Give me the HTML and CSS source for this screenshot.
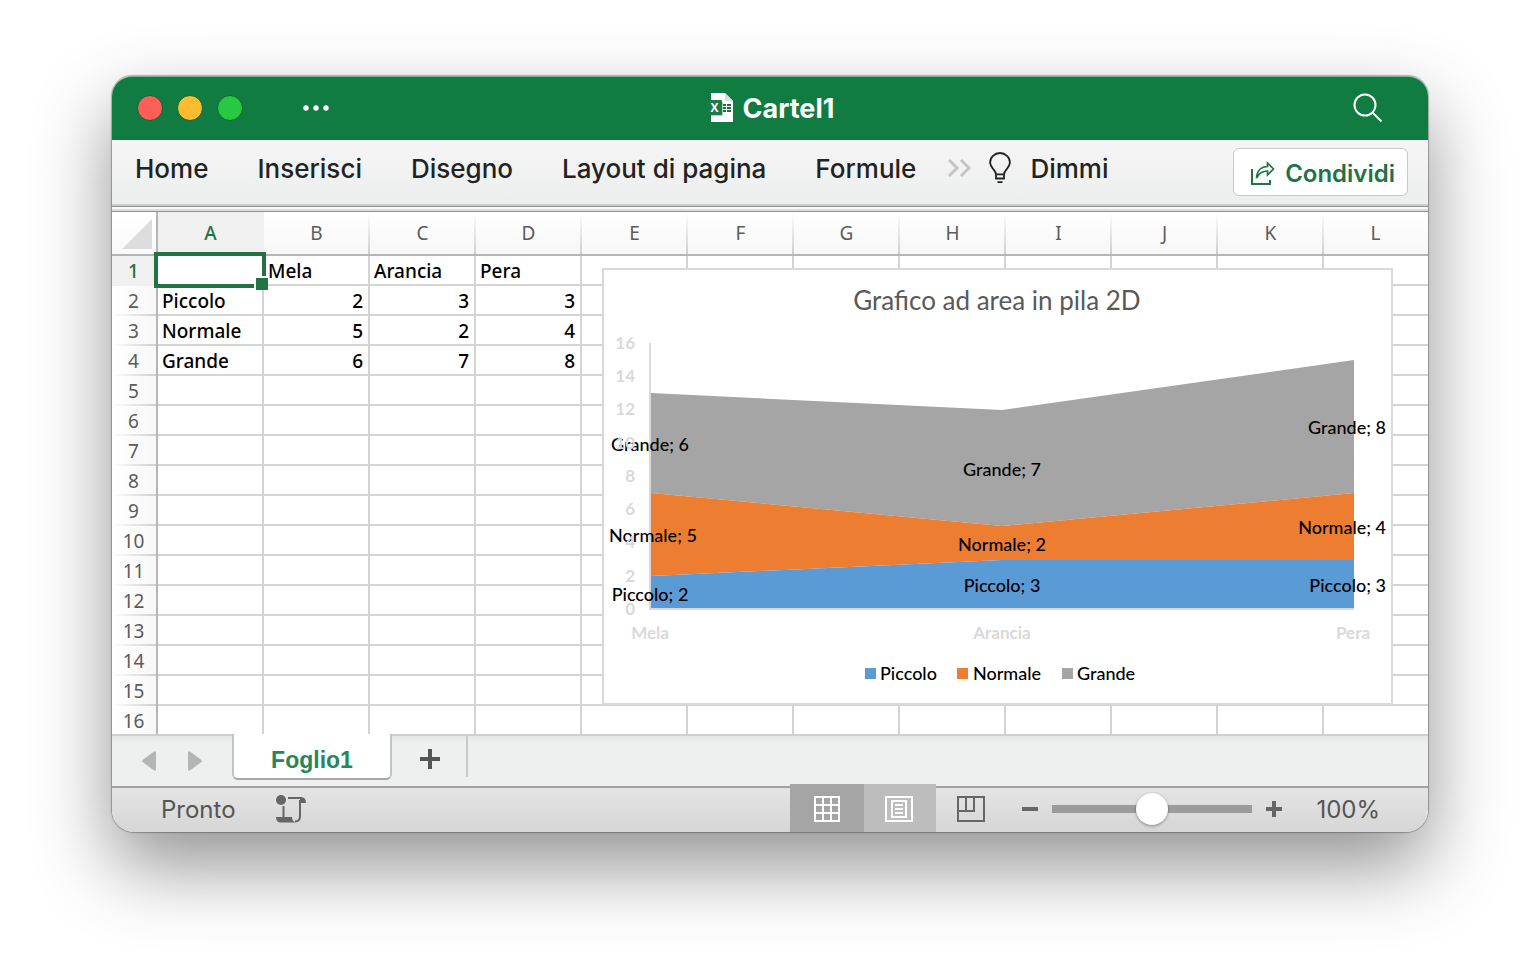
FILE: index.html
```html
<!DOCTYPE html>
<html lang="it">
<head>
<meta charset="utf-8">
<title>Cartel1</title>
<link rel="stylesheet" href="styles.css">
</head>
<body>
<main class="window">
  <header class="titlebar">
    <div class="title-left">
      <button class="light red" aria-label="Chiudi"></button>
      <button class="light yellow" aria-label="Riduci"></button>
      <button class="light green" aria-label="Ingrandisci"></button>
      <button class="icon-button more" aria-label="Altro">
        <svg width="28" height="8" viewBox="0 0 28 8" fill="#fff"><circle cx="4" cy="4" r="2.7"/><circle cx="14" cy="4" r="2.7"/><circle cx="24" cy="4" r="2.7"/></svg>
      </button>
    </div>
    <h1 class="title">
      <svg width="28" height="32" viewBox="0 0 28 32" aria-hidden="true">
        <path d="M4 1h14l8 8v21H4z" fill="#fff"/>
        <path d="M18 1v8h8z" fill="#d4e3da"/>
        <path d="M16 12h3v2h-3zM20 12h4v2h-4zM16 15h3v2h-3zM20 15h4v2h-4zM16 18h3v2h-3zM20 18h4v2h-4z" fill="#14703f"/>
        <rect x="4" y="10" width="12" height="14" fill="#bcd3c6"/>
        <rect x="0" y="8" width="15" height="15" rx="1" fill="#1b7b48"/>
        <text x="7.500" y="20" text-anchor="middle" class="doc-x">X</text>
      </svg>
      <span>Cartel1</span>
    </h1>
    <div class="title-right">
      <button class="icon-button" aria-label="Cerca">
        <svg width="32" height="32" viewBox="0 0 32 32" fill="none" stroke="#fff" stroke-width="2"><circle cx="13" cy="13" r="10.500"/><path d="M20.500 20.500l9 9"/></svg>
      </button>
    </div>
  </header>

  <nav class="ribbon">
    <button class="tab">Home</button>
    <button class="tab">Inserisci</button>
    <button class="tab">Disegno</button>
    <button class="tab">Layout di pagina</button>
    <button class="tab">Formule</button>
    <div class="ribbon-extra">
      <button class="icon-button" aria-label="Altre schede">
        <svg width="24" height="20" viewBox="0 0 24 20" fill="none" stroke="#c4c4c4" stroke-width="3"><path d="M2 2l8 8-8 8M14 2l8 8-8 8"/></svg>
      </button>
      <button class="tab tell">
        <svg width="22" height="32" viewBox="0 0 22 32" fill="none" stroke="#222" stroke-width="1.800"><path d="M7 22.500c0-5-5.900-6-5.900-12a9.900 9.500 0 0 1 19.800 0c0 6-5.900 7-5.900 12v4H7zM7 22.300h8M8.500 30.200h5" fill="none"/></svg>
        <span>Dimmi</span>
      </button>
    </div>
    <button class="share">
      <svg width="26" height="26" viewBox="0 0 26 26" fill="none" stroke="#217346" stroke-width="2"><path d="M2 9v15h18v-4"/><path d="M6.500 18c.5-7 4.500-11.500 11-11.500V3l6 6-6 6v-4c-5 0-8.500 2-11 7z" stroke-width="1.700"/></svg>
      <span>Condividi</span>
    </button>
  </nav>
  <div class="splitter"></div>

  <section class="sheet">
    <table class="grid">
      <colgroup><col class="col-head"><col class="col"><col class="col"><col class="col"><col class="col"><col class="col"><col class="col"><col class="col"><col class="col"><col class="col"><col class="col"><col class="col"><col></colgroup>
      <thead>
        <tr>
          <th class="corner"><svg width="30" height="30" viewBox="0 0 30 30" aria-hidden="true"><path d="M30 0v30H0z" fill="#dcdcdc"/></svg></th>
          <th scope="col" class="current">A</th><th scope="col">B</th><th scope="col">C</th><th scope="col">D</th><th scope="col">E</th><th scope="col">F</th><th scope="col">G</th><th scope="col">H</th><th scope="col">I</th><th scope="col">J</th><th scope="col">K</th><th scope="col">L</th>
        </tr>
      </thead>
      <tbody>
        <tr><th scope="row" class="current">1</th><td class="selected"><div class="selection"></div></td><td>Mela</td><td>Arancia</td><td>Pera</td><td></td><td></td><td></td><td></td><td></td><td></td><td></td><td></td></tr>
        <tr><th scope="row">2</th><td>Piccolo</td><td class="num">2</td><td class="num">3</td><td class="num">3</td><td></td><td></td><td></td><td></td><td></td><td></td><td></td><td></td></tr>
        <tr><th scope="row">3</th><td>Normale</td><td class="num">5</td><td class="num">2</td><td class="num">4</td><td></td><td></td><td></td><td></td><td></td><td></td><td></td><td></td></tr>
        <tr><th scope="row">4</th><td>Grande</td><td class="num">6</td><td class="num">7</td><td class="num">8</td><td></td><td></td><td></td><td></td><td></td><td></td><td></td><td></td></tr>
        <tr><th scope="row">5</th><td></td><td></td><td></td><td></td><td></td><td></td><td></td><td></td><td></td><td></td><td></td><td></td></tr>
        <tr><th scope="row">6</th><td></td><td></td><td></td><td></td><td></td><td></td><td></td><td></td><td></td><td></td><td></td><td></td></tr>
        <tr><th scope="row">7</th><td></td><td></td><td></td><td></td><td></td><td></td><td></td><td></td><td></td><td></td><td></td><td></td></tr>
        <tr><th scope="row">8</th><td></td><td></td><td></td><td></td><td></td><td></td><td></td><td></td><td></td><td></td><td></td><td></td></tr>
        <tr><th scope="row">9</th><td></td><td></td><td></td><td></td><td></td><td></td><td></td><td></td><td></td><td></td><td></td><td></td></tr>
        <tr><th scope="row">10</th><td></td><td></td><td></td><td></td><td></td><td></td><td></td><td></td><td></td><td></td><td></td><td></td></tr>
        <tr><th scope="row">11</th><td></td><td></td><td></td><td></td><td></td><td></td><td></td><td></td><td></td><td></td><td></td><td></td></tr>
        <tr><th scope="row">12</th><td></td><td></td><td></td><td></td><td></td><td></td><td></td><td></td><td></td><td></td><td></td><td></td></tr>
        <tr><th scope="row">13</th><td></td><td></td><td></td><td></td><td></td><td></td><td></td><td></td><td></td><td></td><td></td><td></td></tr>
        <tr><th scope="row">14</th><td></td><td></td><td></td><td></td><td></td><td></td><td></td><td></td><td></td><td></td><td></td><td></td></tr>
        <tr><th scope="row">15</th><td></td><td></td><td></td><td></td><td></td><td></td><td></td><td></td><td></td><td></td><td></td><td></td></tr>
        <tr class="last"><th scope="row">16</th><td></td><td></td><td></td><td></td><td></td><td></td><td></td><td></td><td></td><td></td><td></td><td></td></tr>
      </tbody>
    </table>

    <svg class="chart" width="791" height="437" viewBox="0 0 791 437" role="img" aria-label="Grafico ad area in pila 2D">
      <rect x="1" y="1" width="789" height="435" fill="#fff" stroke="#d9d9d9" stroke-width="2"/>
      <text class="chart-title" x="395" y="42">Grafico ad area in pila 2D</text>
      <path d="M49 125L400 142L752 92V225L400 258L49 225z" fill="#a5a5a5"/>
      <path d="M49 225L400 258L752 225V292H400L49 308z" fill="#ed7d31"/>
      <path d="M49 308L400 292H752V341H49z" fill="#5b9bd5"/>
      <path d="M48 75V341H752" fill="none" stroke="#d9d9d9" stroke-width="2"/>
      <g class="label">
        <text x="48" y="183">Grande; 6</text><text x="51" y="274">Normale; 5</text><text x="48" y="333">Piccolo; 2</text>
        <text x="400" y="208">Grande; 7</text><text x="400" y="283">Normale; 2</text><text x="400" y="324">Piccolo; 3</text>
      </g>
      <g class="label end">
        <text x="784" y="166">Grande; 8</text><text x="784" y="266">Normale; 4</text><text x="784" y="324">Piccolo; 3</text>
      </g>
      <g class="axis end">
        <text x="33" y="81">16</text><text x="33" y="114">14</text><text x="33" y="147">12</text><text x="33" y="181">10</text><text x="33" y="214">8</text><text x="33" y="247">6</text><text x="33" y="280">4</text><text x="33" y="314">2</text><text x="33" y="347">0</text>
      </g>
      <g class="axis">
        <text x="48" y="371">Mela</text><text x="400" y="371">Arancia</text><text x="751" y="371">Pera</text>
      </g>
      <rect x="263" y="400" width="11" height="11" fill="#5b9bd5"/>
      <rect x="355" y="400" width="11" height="11" fill="#ed7d31"/>
      <rect x="460" y="400" width="11" height="11" fill="#a5a5a5"/>
      <g class="label start">
        <text x="278" y="412">Piccolo</text><text x="371" y="412">Normale</text><text x="475" y="412">Grande</text>
      </g>
    </svg>
  </section>

  <nav class="sheets">
    <div class="arrows">
      <button class="icon-button" aria-label="Foglio precedente"><svg width="14" height="20" viewBox="0 0 14 20"><path d="M14 1v18q-1 1-2 .5L.5 11q-.8-1 0-2L12 .5q1-.5 2 .5z" fill="#b5b5b5"/></svg></button>
      <button class="icon-button" aria-label="Foglio successivo"><svg width="14" height="20" viewBox="0 0 14 20"><path d="M0 1v18q1 1 2 .5L13.500 11q.8-1 0-2L2 .5Q1 0 0 1z" fill="#b5b5b5"/></svg></button>
    </div>
    <button class="sheet-tab">Foglio1</button>
    <button class="add-sheet" aria-label="Aggiungi foglio"><svg width="20" height="20" viewBox="0 0 20 20"><path d="M0 10h20M10 0v20" stroke="#555" stroke-width="4"/></svg></button>
  </nav>

  <footer class="status">
    <span class="ready">Pronto</span>
    <button class="icon-button" aria-label="Accessibilità">
      <svg width="30" height="28" viewBox="0 0 30 28" fill="none"><circle cx="5" cy="5" r="5" fill="#666"/><path d="M7.500 11v12M12 3h13.500M24 5v16q0 5.500-5 5.500" stroke="#666" stroke-width="2"/><path d="M0 22h16q0 4 3.500 5.500H5Q0 27.500 0 22zM24 2h1q5 0 5 6h-6z" fill="#666"/></svg>
    </button>
    <div class="views">
      <button class="view normal" aria-label="Normale"><svg width="28" height="28" viewBox="0 0 28 28" fill="none" stroke="#fff" stroke-width="2"><path d="M2 2h24v24H2zM10 2v24M18 2v24M2 10h24M2 18h24"/></svg></button>
      <button class="view page" aria-label="Layout di pagina"><svg width="28" height="28" viewBox="0 0 28 28" fill="none" stroke="#fff" stroke-width="2"><path d="M1 2h26v24H1zM7 6h14v16H7zM10 10h8M10 14h8M10 18h8"/></svg></button>
      <button class="view" aria-label="Interruzioni di pagina"><svg width="28" height="28" viewBox="0 0 28 28" fill="none" stroke="#666" stroke-width="2"><path d="M1 2h26v24H1zM1 16h16V2M9 2v14"/></svg></button>
    </div>
    <div class="zoom">
      <button class="icon-button" aria-label="Riduci zoom"><svg width="16" height="16" viewBox="0 0 16 16"><path d="M0 8h16" stroke="#666" stroke-width="4"/></svg></button>
      <input class="slider" type="range" min="0" max="200" value="100" aria-label="Zoom">
      <button class="icon-button" aria-label="Aumenta zoom"><svg width="16" height="16" viewBox="0 0 16 16"><path d="M0 8h16M8 0v16" stroke="#666" stroke-width="4"/></svg></button>
    </div>
    <span class="percent">100%</span>
  </footer>
</main>
</body>
</html>
```

FILE: styles.css
```css
* { box-sizing: border-box; }

html { background: #fff; }

body {
  min-height: 100vh;
  margin: 0;
  padding: 76px 112px;
  font-family: Inter, "Liberation Sans", sans-serif;
}

button {
  display: flex;
  align-items: center;
  margin: 0;
  padding: 0;
  border: 0;
  background: none;
  color: inherit;
  font: inherit;
  white-space: nowrap;
}

svg { display: block; flex: none; }

.window {
  border-radius: 20px 20px 22px 22px;
  box-shadow: 0 0 1px 1px rgba(0, 0, 0, 0.28), 0 34px 78px rgba(0, 0, 0, 0.43);
}

/* Title bar */
.titlebar {
  display: grid;
  grid-template-columns: 1fr auto 1fr;
  align-items: center;
  height: 64px;
  padding: 0 44px 2px 25px;
  border-top: 1px solid #7fb396;
  border-radius: 20px 20px 0 0;
  background: #107c41;
  color: #fff;
}

.title-left { display: flex; align-items: center; gap: 14px; }
.light { width: 26px; height: 26px; border: 1px solid #0d6636; border-radius: 50%; }
.red { background: #ff5f57; }
.yellow { background: #febc2e; }
.green { background: #28c840; }
.more { margin-left: 45px; }

.title {
  display: flex;
  align-items: center;
  gap: 8px;
  margin: 0 0 0 20px;
  font-size: 27px;
  font-weight: 700;
  line-height: 32px;
}
.title span { padding-top: 2px; }
.doc-x { fill: #fff; font: 700 12px "Open Sans", sans-serif; }
.title-right { display: flex; justify-content: flex-end; }

/* Ribbon */
.ribbon {
  display: flex;
  align-items: flex-start;
  gap: 49px;
  height: 64px;
  padding: 8px 20px 0 23px;
  background: linear-gradient(#f5f5f5, #eceeed);
  color: #222;
  font-size: 26px;
  font-weight: 500;
}
.tab { height: 40px; }
.ribbon-extra { display: flex; align-items: center; gap: 18px; margin-left: -18px; }
.tell { gap: 19px; }
.share {
  gap: 9px;
  height: 48px;
  margin-left: auto;
  padding: 2px 12px 0 16px;
  border: 1px solid #c9c9c9;
  border-radius: 6px;
  background: #fff;
  color: #217346;
  font-size: 24px;
  font-weight: 600;
}
.splitter {
  height: 8px;
  background: linear-gradient(#cdcdcd 2px, #929292 2px 3px, #f8f8f8 3px 5px, #dcdcdc 5px 7px, #929292 7px);
}

/* Worksheet */
.sheet { position: relative; overflow: hidden; background: #fff; }

.grid {
  width: 100%;
  border-collapse: separate;
  border-spacing: 0;
  table-layout: fixed;
  font-family: "Noto Sans", "Open Sans", sans-serif;
  font-size: 19px;
  line-height: 28px;
}
.col-head { width: 46px; }
.col { width: 106px; }

.grid td {
  height: 30px;
  padding: 2px 5px 0 4px;
  line-height: 26px;
  border-right: 2px solid #d4d4d4;
  border-bottom: 2px solid #d4d4d4;
  color: #000;
  font-weight: 500;
  white-space: nowrap;
}
.grid th { padding: 0 1px 0 0; color: #5b5b5b; font-weight: 400; text-align: center; }
.grid thead th {
  height: 44px;
  border-bottom: 2px solid #b5b5b5;
  background: linear-gradient(#fff, #cfcfcf) right / 2px 100% no-repeat, linear-gradient(#fff, #f7f7f7);
}
.grid tbody th {
  border-right: 2px solid #b5b5b5;
  background: linear-gradient(90deg, #fff, #cfcfcf) bottom / 100% 2px no-repeat, linear-gradient(90deg, #fff, #f7f7f7);
}
.grid thead .current { background: #f0f0f0; color: #217346; }
.grid tbody .current { background: #f0f0f0; color: #217346; }
.grid .current { font-weight: 500; }
.grid thead .corner { border-right: 2px solid #b5b5b5; background: linear-gradient(#fff, #f9f9f9); }
.corner svg { margin: 2px 3px 0 auto; }
.grid td:last-child, .grid thead th:last-child { border-right: 0; }
.grid thead th:last-child { background: linear-gradient(#fff, #f7f7f7); }
.grid .last td, .grid .last th { height: 28px; border-bottom: 0; }
.grid .last th { padding-top: 2px; line-height: 26px; background: linear-gradient(90deg, #fff, #f7f7f7); }
.grid .num { text-align: right; }

.selected { position: relative; }
.selection { position: absolute; inset: -4px; border: 4px solid #217346; }
.selection::after {
  content: "";
  position: absolute;
  right: -6px;
  bottom: -6px;
  width: 12px;
  height: 12px;
  border: solid #fff;
  border-width: 2px 0 0 2px;
  background: #217346;
}

.chart { position: absolute; left: 490px; top: 56px; font-family: Lato, "Open Sans", sans-serif; }
.chart-title { fill: #595959; font-size: 26px; text-anchor: middle; }
.label { fill: #000; font-size: 18px; font-weight: 500; text-anchor: middle; }
.axis { fill: #d9d9d9; font-size: 17px; font-weight: 700; text-anchor: middle; }
.end { text-anchor: end; }
.start { text-anchor: start; }

/* Sheet tabs */
.sheets {
  display: flex;
  align-items: flex-start;
  height: 52px;
  background: linear-gradient(#cfcfcf 2px, #e6e7e7 2px, #eef0ef 10px);
}
.arrows { display: flex; gap: 32px; padding: 17px 30px 0; }
.sheet-tab {
  justify-content: center;
  width: 160px;
  height: 46px;
  padding-top: 8px;
  border: 2px solid #c3c3c3;
  border-top: 0;
  border-bottom-color: #a6a6a6;
  border-radius: 0 0 6px 6px;
  background: #fff;
  color: #2a8656;
  font: 700 23px "Liberation Sans", sans-serif;
}
.add-sheet {
  justify-content: center;
  width: 76px;
  height: 41px;
  margin-top: 2px;
  border-right: 2px solid #c9c9c9;
  padding: 5px 0 0 2px;
}

/* Status bar */
.status {
  display: flex;
  align-items: center;
  height: 46px;
  padding: 0 48px 2px 49px;
  border-top: 2px solid #a1a1a1;
  border-radius: 0 0 22px 22px;
  background: linear-gradient(#e4e4e4, #d6d6d6);
  color: #555;
  font-size: 24px;
}
.ready { margin-right: 40px; }
.views { display: flex; align-self: flex-end; margin: 0 0 -2px auto; }
.view { justify-content: center; width: 72px; height: 48px; padding: 2px 3px 0 0; }
.normal { width: 74px; padding-right: 0; background: #a5a5a5; }
.page { background: #bdbdbd; }
.zoom { display: flex; align-items: center; gap: 14px; margin: 0 34px 0 14px; }

.slider {
  width: 200px;
  height: 32px;
  margin: 0;
  appearance: none;
  border-radius: 4px;
  background: linear-gradient(#9b9b9b, #9b9b9b) center / 100% 8px no-repeat;
}
.slider::-webkit-slider-thumb {
  appearance: none;
  width: 32px;
  height: 32px;
  border-radius: 50%;
  background: #fff;
  box-shadow: 0 1px 3px rgba(0, 0, 0, 0.4);
}
```
